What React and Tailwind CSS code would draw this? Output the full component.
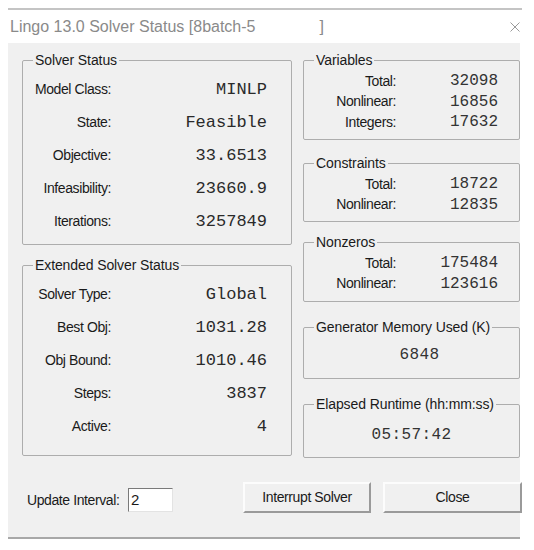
import React from "react";

function Group({ title, className, children }) {
  return (
    <fieldset className={"border border-[#adadad] rounded-[2px] p-0 m-0 min-w-0 " + className}>
      <legend className="ml-[10px] px-[2px] text-[14px] leading-[16px] text-[#1a1a1a] tracking-[-0.1px]">{title}</legend>
      {children}
    </fieldset>
  );
}

function LeftRows({ rows }) {
  return (
    <div className="pt-[5px]">
      {rows.map(([l, v]) => (
        <div key={l} className="flex items-center h-[33px]">
          <span className="w-[88px] text-right text-[14px] text-[#1a1a1a] tracking-[-0.4px]">{l}</span>
          <span className="flex-1 text-right pr-[24px] font-['Liberation_Mono',monospace] text-[17px] text-[#2a2a2a]">{v}</span>
        </div>
      ))}
    </div>
  );
}

function RightRows({ rows }) {
  return (
    <div className="pt-[3px]">
      {rows.map(([l, v]) => (
        <div key={l} className="flex items-center h-[20.5px]">
          <span className="w-[92px] text-right text-[14px] text-[#1a1a1a] tracking-[-0.4px]">{l}</span>
          <span className="flex-1 text-right pr-[21px] font-['Liberation_Mono',monospace] text-[16px] text-[#333]">{v}</span>
        </div>
      ))}
    </div>
  );
}

export default function App() {
  return (
    <div className="w-[534px] h-[550px] bg-white font-['Liberation_Sans',Arial,sans-serif] overflow-hidden">
      <div className="ml-[8px] mt-[8px] w-[514px] h-[2px] bg-[#c4c4c4]" />
      <div className="ml-[8px] w-[514px] h-[33px] flex items-center pl-[2px] text-[16px] text-[#8a8a8a]">
        <span>Lingo 13.0 Solver Status [8batch-5</span>
        <span className="ml-[64px]">]</span>
        <span className="ml-auto mr-[2px]">
          <svg width="10" height="10" viewBox="0 0 10 10">
            <path d="M0.5 0.5 L9.5 9.5 M9.5 0.5 L0.5 9.5" stroke="#9a9a9a" strokeWidth="1" fill="none" />
          </svg>
        </span>
      </div>
      <div className="ml-[8px] w-[512px] h-[496px] bg-[#f0f0f0] border-b-2 border-[#a8a8a8] flex flex-col">
        <div className="flex pt-[9px] pl-[14px] gap-[11px]">
          <div className="w-[270px] flex flex-col">
            <Group title="Solver Status" className="h-[193px]">
              <LeftRows
                rows={[
                  ["Model Class:", "MINLP"],
                  ["State:", "Feasible"],
                  ["Objective:", "33.6513"],
                  ["Infeasibility:", "23660.9"],
                  ["Iterations:", "3257849"],
                ]}
              />
            </Group>
            <Group title="Extended Solver Status" className="h-[199px] mt-[12px]">
              <LeftRows
                rows={[
                  ["Solver Type:", "Global"],
                  ["Best Obj:", "1031.28"],
                  ["Obj Bound:", "1010.46"],
                  ["Steps:", "3837"],
                  ["Active:", "4"],
                ]}
              />
            </Group>
          </div>
          <div className="w-[217px] flex flex-col">
            <Group title="Variables" className="h-[88px]">
              <RightRows rows={[["Total:", "32098"], ["Nonlinear:", "16856"], ["Integers:", "17632"]]} />
            </Group>
            <Group title="Constraints" className="h-[67px] mt-[15px]">
              <RightRows rows={[["Total:", "18722"], ["Nonlinear:", "12835"]]} />
            </Group>
            <Group title="Nonzeros" className="h-[68px] mt-[12px]">
              <RightRows rows={[["Total:", "175484"], ["Nonlinear:", "123616"]]} />
            </Group>
            <Group title="Generator Memory Used (K)" className="h-[60px] mt-[17px]">
              <div className="flex justify-center pl-[16px] pt-[8px] font-['Liberation_Mono',monospace] text-[16px] text-[#333] tracking-[0.4px]">6848</div>
            </Group>
            <Group title="Elapsed Runtime (hh:mm:ss)" className="h-[62px] mt-[17px]">
              <div className="flex justify-center pt-[11px] font-['Liberation_Mono',monospace] text-[16px] text-[#333] tracking-[0.4px]">05:57:42</div>
            </Group>
          </div>
        </div>
        <div className="flex items-start mt-[24px] pl-[19px]">
          <span className="shrink-0 w-[101px] mt-[8px] text-[14px] text-[#1a1a1a] tracking-[-0.4px] whitespace-nowrap">Update Interval:</span>
          <div className="shrink-0 mt-[6px] w-[45px] h-[24px] bg-white border border-t-[#7a7a7a] border-l-[#7a7a7a] border-r-[#e3e3e3] border-b-[#e3e3e3] text-[15px] leading-[22px] pl-[2px] text-[#1a1a1a]">2</div>
          <button className="shrink-0 ml-[70px] w-[128px] h-[31px] bg-[#f0f0f0] border-2 border-t-[#fcfcfc] border-l-[#fcfcfc] border-r-[#9a9a9a] border-b-[#9a9a9a] text-[14px] text-[#1a1a1a] tracking-[-0.4px]">Interrupt Solver</button>
          <button className="shrink-0 ml-[12px] w-[139px] h-[31px] bg-[#f0f0f0] border-2 border-t-[#fcfcfc] border-l-[#fcfcfc] border-r-[#9a9a9a] border-b-[#9a9a9a] text-[14px] text-[#1a1a1a] tracking-[-0.4px]">Close</button>
        </div>
      </div>
    </div>
  );
}
